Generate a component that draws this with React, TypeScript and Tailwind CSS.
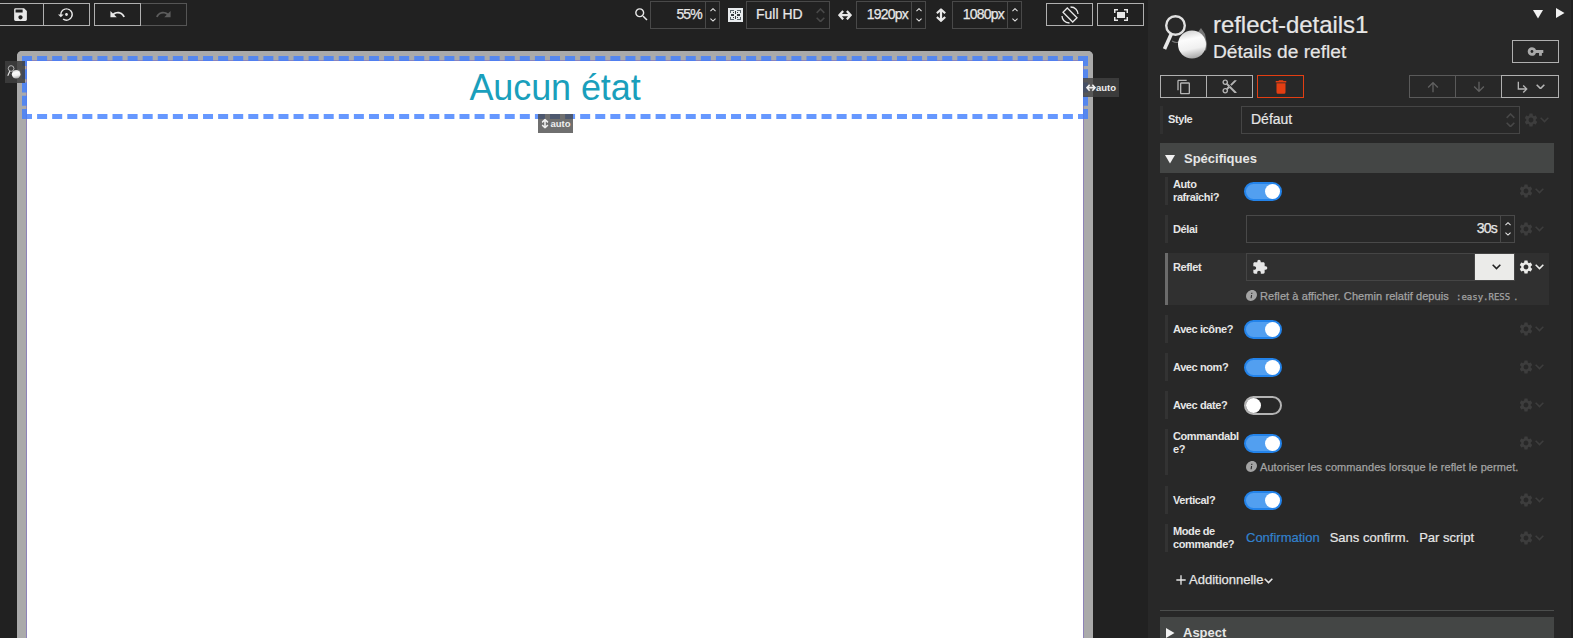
import React from 'react';
import {
  MdSave, MdSettingsBackupRestore, MdSearch, MdContentCopy, MdContentCut, MdVpnKey,
  MdSettings, MdExtension, MdSubdirectoryArrowRight, MdArrowUpward, MdArrowDownward, MdInfo, MdAdd,
} from 'react-icons/md';

const Chevron = ({ className = '', up = false }: { className?: string; up?: boolean }) => (
  <svg viewBox="0 0 8 5" className={className} fill="none" stroke="currentColor" strokeWidth="1.4">
    <path d={up ? 'M.6 4.3 4 .9l3.4 3.4' : 'M.6.7 4 4.1 7.4.7'} />
  </svg>
);

const Spinner = () => (
  <span className="flex h-full w-[14px] flex-col items-center justify-between border-l border-[#494949] py-[6px] text-[#e4e4e4]">
    <Chevron up className="w-[6px]" />
    <Chevron className="w-[6px]" />
  </span>
);

const NumberField = ({ value, className }: { value: string; className: string }) => (
  <div className={`flex h-7 shrink-0 items-center border border-[#494949] ${className}`}>
    <span className="flex-1 pr-[3px] pb-[2px] text-right text-[14px] tracking-[-0.8px] [-webkit-text-stroke:0.25px]">
      {value}
    </span>
    <Spinner />
  </div>
);

const SelectArrows = () => (
  <span className="flex flex-col gap-[3px] text-[#484848]">
    <Chevron up className="w-[9px]" />
    <Chevron className="w-[9px]" />
  </span>
);

const DoubleArrow = ({ className = '' }: { className?: string }) => (
  <svg viewBox="0 0 15 11" className={className} fill="none" stroke="currentColor" strokeWidth="2.4">
    <path d="M2 5.500h11M5.500 1 1.500 5.500 5.500 10M9.500 1l4 4.500-4 4.500" />
  </svg>
);

const UndoArrow = ({ className = '' }: { className?: string }) => (
  <svg viewBox="0 0 24 24" className={className} fill="currentColor">
    <path d="M12.500 8c-2.650 0-5.050.990-6.900 2.600L2 7v9h9l-3.620-3.620c1.390-1.160 3.160-1.880 5.120-1.880 3.540 0 6.550 2.310 7.600 5.500l2.370-.780C21.080 11.030 17.150 8 12.500 8z" />
  </svg>
);

const Trash = () => (
  <svg viewBox="0 0 24 24" className="size-[18px]" fill="currentColor">
    <path d="M19 4h-3.500l-1-1h-5l-1 1H5v2h14M6 19a2 2 0 0 0 2 2h8a2 2 0 0 0 2-2V7H6z" />
  </svg>
);

const Button = ({ children, className }: { children: React.ReactNode; className: string }) => (
  <button className={`flex h-[23px] shrink-0 items-center justify-center border ${className}`}>{children}</button>
);

const ReflectIcon = ({ className, id }: { className: string; id: string }) => (
  <svg viewBox="0 0 46 46" className={className}>
    <defs>
      <linearGradient id={id} x1=".4" y1="0" x2=".6" y2="1">
        <stop offset="0" stopColor="#d4d4d4" />
        <stop offset=".3" stopColor="#fcfcfc" />
        <stop offset=".65" stopColor="#f0f0f0" />
        <stop offset="1" stopColor="#a4a4a4" />
      </linearGradient>
    </defs>
    <circle cx="13.500" cy="11.500" r="9.300" fill="none" stroke="#e0e0e0" strokeWidth="2.400" />
    <path d="M9.500 19.500 2.500 35" stroke="#e8e8e8" strokeWidth="3.600" />
    <path d="M30 17l6 1 3-4 4 6 2 10-1 7-7-9z" fill="#777" />
    <path d="M10 27q5 3 9 0" fill="none" stroke="#777" strokeWidth="1.200" />
    <circle cx="30" cy="30.500" r="14" fill={`url(#${id})`} />
  </svg>
);

const Options = ({ active = false }: { active?: boolean }) => (
  <span className={`flex h-7 w-[34px] shrink-0 items-center ${active ? 'text-[#ebebe9]' : 'text-[#3d3d3d]'}`}>
    <MdSettings className="size-4" />
    <Chevron className="ml-px w-[9px]" />
  </span>
);

const Toggle = ({ on }: { on: boolean }) => (
  <span
    className={`-ml-0.5 flex h-[19px] w-[38px] items-center rounded-full border-2 ${
      on ? 'justify-end border-[#2383ea] bg-[#529ff0]' : 'justify-start border-[#b4b4b4]'
    }`}
  >
    <span className="size-[15px] rounded-full bg-white" />
  </span>
);

const Hint = ({ children }: { children: React.ReactNode }) => (
  <div className="flex h-[23px] items-center pl-[77px] text-[11px] tracking-[0.08px] whitespace-nowrap text-[#a3a3a3] [-webkit-text-stroke:0.25px]">
    <MdInfo className="mr-[2px] -mt-[3px] size-[13px] shrink-0 skew-x-[-8deg]" />
    <span>{children}</span>
  </div>
);

type RowProps = { label: React.ReactNode; children: React.ReactNode; hint?: React.ReactNode; active?: boolean };

const Row = ({ label, children, hint, active = false }: RowProps) => (
  <div className={`mb-[10px] border-l-[3px] ${active ? 'border-[#6b6b6b] bg-[#303030]' : 'border-[#333]'}`}>
    <div className="flex h-7">
      <div className="flex w-[78px] shrink-0 items-center pl-[5px] text-[11px] leading-[13px] font-bold tracking-[-0.4px]">
        <span>{label}</span>
      </div>
      <div className="flex w-[269px] shrink-0 items-center">{children}</div>
      <span className="ml-[3px]">
        <Options active={active} />
      </span>
    </div>
    {hint}
  </div>
);

const Toolbar = () => (
  <header className="flex h-[51px] items-start pt-px text-[#e8e8e8]">
    <div className="mt-0.5 flex">
      <Button className="w-11 border-l-0 border-[#b0b0b0]"><MdSave className="-ml-[3px] size-[17px]" /></Button>
      <Button className="-ml-px w-[47px] border-[#b0b0b0]"><MdSettingsBackupRestore className="size-[17px]" /></Button>
      <Button className="ml-1 w-[47px] border-[#b0b0b0]"><UndoArrow className="size-[17px]" /></Button>
      <Button className="w-[46px] border-l-0 border-[#555] text-[#5d5d5d]"><UndoArrow className="size-[17px] -scale-x-100" /></Button>
    </div>
    <MdSearch className="mt-[5px] ml-[446px] size-[17px]" />
    <NumberField value="55%" className="w-[70px]" />
    <svg viewBox="0 0 15 14" className="mt-[7px] ml-2 h-[14px] w-[15px]">
      <path d="M0 0h15v14H0z" fill="#e8ecee" />
      <path d="M2 2h4v1H2zM9 2h4v1H9zM2 2h1v3H2zM12 2h1v3h-1zM2 9h1v3H2zM12 9h1v3h-1zM2 11h4v1H2zM9 11h4v1H9z" fill="#5b646b" />
      <path d="M7 3h1v3H7zM7 8h1v3H7zM3 6h3v2H3zM9 6h3v2H9zM5 4h1v1H5zM9 4h1v1H9zM5 9h1v1H5zM9 9h1v1H9z" fill="#363b40" />
    </svg>
    <div className="ml-[3px] flex h-7 w-[84px] shrink-0 items-center justify-between border border-[#494949] pr-1 pl-[10px] text-[14px]">
      <span className="-ml-px pb-[1px] [-webkit-text-stroke:0.2px]">Full HD</span>
      <SelectArrows />
    </div>
    <DoubleArrow className="mt-[9px] ml-2 w-[14px] shrink-0" />
    <NumberField value="1920px" className="ml-1 w-[70px]" />
    <DoubleArrow className="mt-[9px] ml-2 w-[14px] shrink-0 rotate-90" />
    <NumberField value="1080px" className="ml-1 w-[70px]" />
    <Button className="mt-0.5 ml-6 w-[47px] border-[#b0b0b0]">
      <svg viewBox="0 0 18 18" className="size-[18px]" fill="none" stroke="currentColor" strokeWidth="1.300">
        <path d="M6.300 2 16 11.700 11.700 16 2 6.300zM9.500 1q3.500 0 5.500 2.200T17 8M8.500 17Q5 17 3 14.800T1 10" />
      </svg>
    </Button>
    <Button className="mt-0.5 ml-1 w-[47px] border-[#b0b0b0]">
      <svg viewBox="0 0 14 12" className="w-[14px]" fill="none" stroke="currentColor" strokeWidth="1.500">
        <path d="M.75 4V.75H4M10 .75h3.250V4M13.250 8v3.250H10M4 11.250H.75V8" />
        <path d="M3 3h8v6H3z" fill="currentColor" stroke="none" />
      </svg>
    </Button>
  </header>
);

const Canvas = () => (
  <div className="relative ml-[17px] h-[640px] w-[1076px] shrink-0 rounded-t-[5px] border-[9px] border-b-0 border-[#aaa]">
    <div className="h-full border border-[#8d83b8] bg-white pt-[6px] text-center text-[36px] leading-[42px] tracking-[-0.1px] text-[#1a9fbc]">
      Aucun état
    </div>
    <div className="absolute top-[-4px] left-[-4px] h-[63px] w-[1066px] border-[5px] border-dashed border-[rgba(65,127,255,0.8)]" />
    <span className="absolute top-[1px] left-[-21px] flex h-[22px] w-5 items-center justify-center bg-[rgba(62,62,62,0.85)]">
      <ReflectIcon id="ball-small" className="-ml-[2px] size-[14px]" />
    </span>
    <span className="absolute top-[18px] left-[1057px] flex h-[19px] w-9 items-center justify-center bg-[rgba(66,66,66,0.8)] pt-px text-[9.500px] font-bold text-[#eee]">
      <DoubleArrow className="w-[10px]" />auto
    </span>
    <span className="absolute top-[54px] left-[512px] flex h-[19px] w-[35px] items-center justify-center bg-[rgba(70,70,70,0.78)] pt-px text-[9.500px] font-bold text-[#eee]">
      <DoubleArrow className="w-[10px] rotate-90" />auto
    </span>
  </div>
);

const Triangle = ({ right = false, className = '' }: { right?: boolean; className?: string }) => (
  <svg viewBox="0 0 10 10" className={`size-[10px] shrink-0 ${className}`} fill="#f2f2f2">
    <path d={right ? 'M1 0v10l8.500-5z' : 'M0 1h10L5 9.500z'} />
  </svg>
);

const Sidebar = () => (
  <aside className="w-[425px] shrink-0 border-r-2 border-[#202020] bg-[#282828] pl-3 text-[#e6e6e6]">
    <div className="flex h-[75px]">
      <ReflectIcon id="ball-large" className="mt-[14px] ml-[2px] size-[46px]" />
      <div className="ml-[5px] w-[291px] whitespace-nowrap [-webkit-text-stroke:0.2px]">
        <div className="mt-[11px] text-[24px] leading-[28px] tracking-[-0.05px]">reflect-details1</div>
        <div className="mt-px text-[19.200px] leading-6">Détails de reflet</div>
      </div>
      <div className="flex flex-1 flex-col">
        <div className="mt-2 flex h-[10px] gap-3 pl-[29px]">
          <Triangle className="mt-px" />
          <Triangle right />
        </div>
        <Button className="mt-[22px] ml-2 w-[47px] border-[#b0b0b0] text-[#aaa]"><MdVpnKey className="size-[17px]" /></Button>
      </div>
    </div>
    <div className="flex h-[31px] text-[#b5b5b5]">
      <Button className="w-[47px] border-[#b0b0b0]"><MdContentCopy className="size-4" /></Button>
      <Button className="w-[46px] border-l-0 border-[#b0b0b0]"><MdContentCut className="size-[17px]" /></Button>
      <Button className="ml-1 w-[47px] border-[#e33e12] text-[#e33e12]"><Trash /></Button>
      <Button className="ml-[105px] w-[47px] border-[#5a5a5a] text-[#606060]"><MdArrowUpward className="size-4" /></Button>
      <Button className="w-[45px] border-x-0 border-[#5a5a5a] text-[#606060]"><MdArrowDownward className="size-4" /></Button>
      <Button className="w-[58px] border-[#b0b0b0]">
        <MdSubdirectoryArrowRight className="size-4" /><Chevron className="ml-[5px] w-[9px]" />
      </Button>
    </div>
    <div className="flex h-7 w-[399px] items-center border-l-[3px] border-[#303030] pl-[5px]">
      <span className="w-[73px] shrink-0 pb-px text-[11px] font-bold tracking-[-0.4px]">Style</span>
      <div className="flex h-7 w-[279px] shrink-0 items-center justify-between border border-[#454545] pr-1 pl-[9px] text-[14px]">
        <span className="pb-px [-webkit-text-stroke:0.2px]">Défaut</span>
        <SelectArrows />
      </div>
      <span className="ml-[3px]"><Options /></span>
    </div>
    <section className="mt-[9px] w-[394px]">
      <h2 className="mb-1 flex h-[30px] items-center gap-[9px] bg-[#444645] pt-px pl-[5px] text-[13px] font-bold">
        <Triangle />Spécifiques
      </h2>
      <div className="mx-[5px]">
        <Row label={<>Auto<br />rafraîchi?</>}><Toggle on /></Row>
        <Row label="Délai"><NumberField value="30s" className="w-[269px]" /></Row>
        <Row
          active
          label="Reflet"
          hint={
            <div className="h-6 pt-[4px]">
              <Hint>
                Reflet à afficher. Chemin relatif depuis{' '}
                <code className="px-1 font-['DejaVu_Sans_Mono',monospace] text-[9px] tracking-normal">:easy.RESS</code>.
              </Hint>
            </div>
          }
        >
          <div className="flex h-7 w-full items-center border border-[#454545]">
            <MdExtension className="ml-[5px] size-4" />
            <span className="ml-auto flex h-[26px] w-10 items-center justify-center border-l border-[#454545] bg-[#ebebe9] pl-[3px] text-[#222]">
              <Chevron className="w-[9px]" />
            </span>
          </div>
        </Row>
        <Row label="Avec icône?"><Toggle on /></Row>
        <Row label="Avec nom?"><Toggle on /></Row>
        <Row label="Avec date?"><Toggle on={false} /></Row>
        <Row
          label={<>Commandabl<br />e?</>}
          hint={<div className="h-[19px]"><div className="-mt-px"><Hint>Autoriser les commandes lorsque le reflet le permet.</Hint></div></div>}
        >
          <Toggle on />
        </Row>
        <div className="pt-px">
          <Row label="Vertical?"><Toggle on /></Row>
        </div>
        <Row label={<>Mode de<br />commande?</>}>
          <div className="flex gap-[10px] pb-px text-[13px] whitespace-nowrap [-webkit-text-stroke:0.2px]">
            <span className="text-[#3282ce]">Confirmation</span>
            <span>Sans confirm.</span>
            <span>Par script</span>
          </div>
        </Row>
      </div>
      <div className="flex h-[49px] items-start border-b border-[#4c4e4d] pt-[9px] pl-[13px] text-[13px] leading-[17px] [-webkit-text-stroke:0.25px]">
        <MdAdd className="mt-px size-4" />Additionnelle<Chevron className="mt-[7px] ml-px w-[9px]" />
      </div>
      <h2 className="mt-1.5 flex h-[30px] items-center gap-[8px] bg-[#444645] pt-px pl-[5px] text-[13px] font-bold">
        <Triangle right />Aspect
      </h2>
    </section>
  </aside>
);

export default function App() {
  return (
    <div className="flex h-[638px] w-[1573px] overflow-hidden bg-[#212121] font-['Liberation_Sans',Arial,sans-serif]">
      <main className="w-[1148px] shrink-0">
        <Toolbar />
        <Canvas />
      </main>
      <Sidebar />
    </div>
  );
}
